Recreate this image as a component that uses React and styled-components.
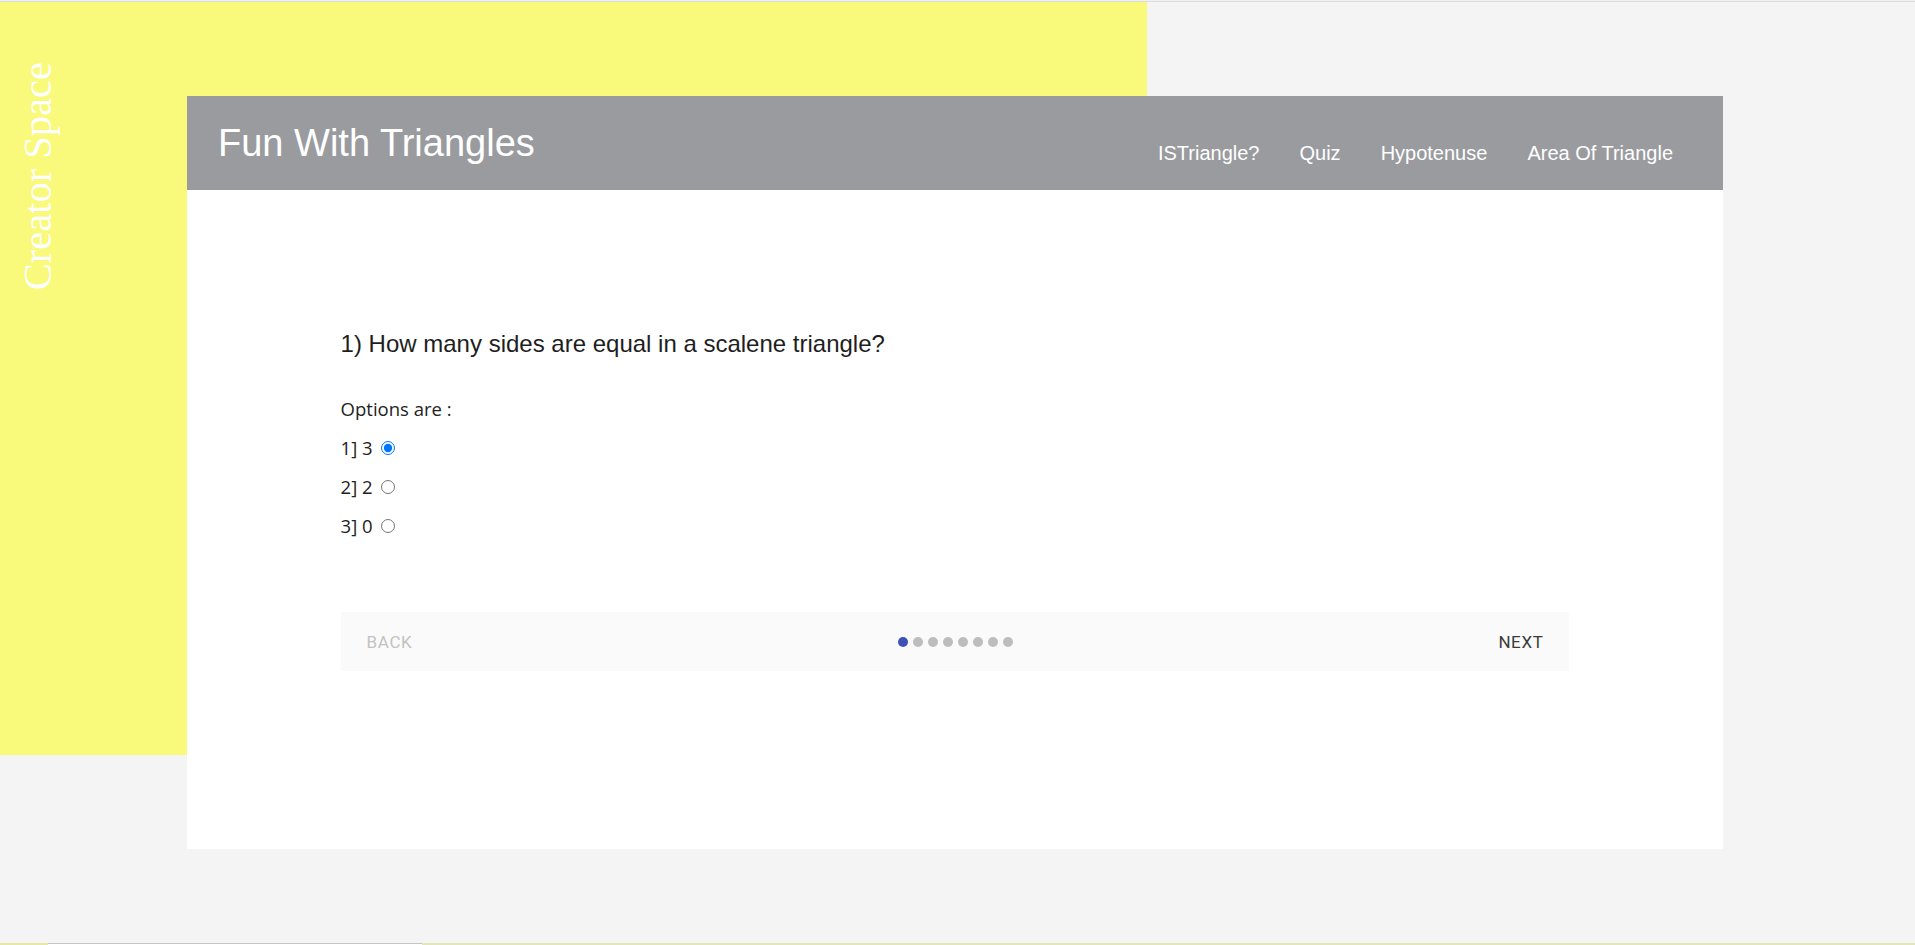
import React from "react";
import styled, { createGlobalStyle } from "styled-components";

const GlobalStyle = createGlobalStyle`
  html, body {
    margin: 0;
    padding: 0;
  }
  body {
    background: #f4f4f4;
    font-family: "Liberation Sans", Arial, sans-serif;
  }
`;

const Page = styled.div`
  min-height: 945px;
  display: flex;
  flex-direction: column;
`;

const TopRule = styled.div`
  height: 2px;
  background: linear-gradient(#f0f0f0 50%, #dcdcdc 50%);
`;

const Stage = styled.div`
  display: grid;
  grid-template-columns: 187px 960px 576px 1fr;
  grid-template-rows: 94px 659px 94px;
`;

const Backdrop = styled.aside`
  grid-column: 1 / 3;
  grid-row: 1 / 3;
  background: #f9f97c;
  padding: 60px 0 0 18px;
`;

const Brand = styled.h2`
  margin: 0;
  writing-mode: vertical-rl;
  transform: rotate(180deg);
  font-family: "Liberation Serif", "Times New Roman", serif;
  font-weight: 400;
  font-size: 40.5px;
  line-height: 1;
  color: #fff;
`;

const Card = styled.main`
  grid-column: 2 / 4;
  grid-row: 2 / 4;
  background: #fff;
  display: flex;
  flex-direction: column;
`;

const Header = styled.header`
  height: 94px;
  flex-shrink: 0;
  background: #9a9b9f;
  display: flex;
  justify-content: space-between;
  align-items: center;
  padding: 0 50px 0 31px;
`;

const Title = styled.h1`
  margin: 0;
  font-size: 38px;
  font-weight: 400;
  color: #fff;
`;

const Nav = styled.nav`
  align-self: flex-end;
  padding-bottom: 25px;
  display: flex;
  gap: 40px;
`;

const NavLink = styled.a`
  font-size: 20px;
  color: #fff;
  text-decoration: none;
  line-height: 23px;
`;

const Body = styled.section`
  width: 80%;
  align-self: center;
  padding-top: 140px;
`;

const Question = styled.h3`
  margin: 0;
  font-size: 24px;
  font-weight: 400;
  color: #1e1e1e;
`;

const Options = styled.div`
  margin-top: 38px;
  display: flex;
  flex-direction: column;
  gap: 14px;
  font-family: "Open Sans", "Noto Sans", sans-serif;
  font-size: 18.5px;
  line-height: 25px;
  color: #222;
`;

const OptionRow = styled.label`
  display: flex;
  align-items: center;
`;

const Radio = styled.input`
  margin: 0 0 0 8px;
  width: 14px;
  height: 14px;
`;

const Stepper = styled.div`
  margin-top: 74px;
  height: 59px;
  box-sizing: border-box;
  background: #fafafa;
  display: flex;
  justify-content: space-between;
  align-items: center;
  padding: 0 20px;
`;

const StepButton = styled.button`
  background: none;
  border: 0;
  padding: 6px 6px;
  font-family: Roboto, "Liberation Sans", sans-serif;
  font-size: 17px;
  font-weight: 400;
  letter-spacing: 0.6px;
  text-transform: uppercase;
  color: ${(p) => (p.disabled ? "#c2c2c2" : "#3a3a3a")};
  cursor: ${(p) => (p.disabled ? "default" : "pointer")};
`;

const Dots = styled.div`
  display: flex;
  gap: 5px;
`;

const Dot = styled.span`
  width: 10px;
  height: 10px;
  border-radius: 50%;
  background: ${(p) => (p.active ? "#3f51b5" : "#bdbdbd")};
`;

const Spacer = styled.div`
  flex: 1;
`;

const Footer = styled.footer`
  height: 2px;
  display: flex;
  background: #e2e6b9;
`;

const FooterLead = styled.div`
  width: 48px;
  background: #e6e8a4;
`;

const FooterBox = styled.div`
  width: 374px;
  box-sizing: border-box;
  border-top: 1px solid #c6c6c6;
  background: #fff;
`;

const links = ["ISTriangle?", "Quiz", "Hypotenuse", "Area Of Triangle"];
const answers = ["3", "2", "0"];

export default function App() {
  return (
    <Page>
      <GlobalStyle />
      <TopRule />
      <Stage>
        <Backdrop>
          <Brand>Creator Space</Brand>
        </Backdrop>
        <Card>
          <Header>
            <Title>Fun With Triangles</Title>
            <Nav>
              {links.map((l) => (
                <NavLink key={l} href="#">
                  {l}
                </NavLink>
              ))}
            </Nav>
          </Header>
          <Body>
            <Question>1) How many sides are equal in a scalene triangle?</Question>
            <Options>
              <div>Options are :</div>
              {answers.map((a, i) => (
                <OptionRow key={a}>
                  {i + 1}] {a}
                  <Radio type="radio" name="q1" defaultChecked={i === 0} />
                </OptionRow>
              ))}
            </Options>
            <Stepper>
              <StepButton disabled>Back</StepButton>
              <Dots>
                {Array.from({ length: 8 }).map((_, i) => (
                  <Dot key={i} active={i === 0} />
                ))}
              </Dots>
              <StepButton>Next</StepButton>
            </Stepper>
          </Body>
        </Card>
      </Stage>
      <Spacer />
      <Footer>
        <FooterLead />
        <FooterBox />
      </Footer>
    </Page>
  );
}
